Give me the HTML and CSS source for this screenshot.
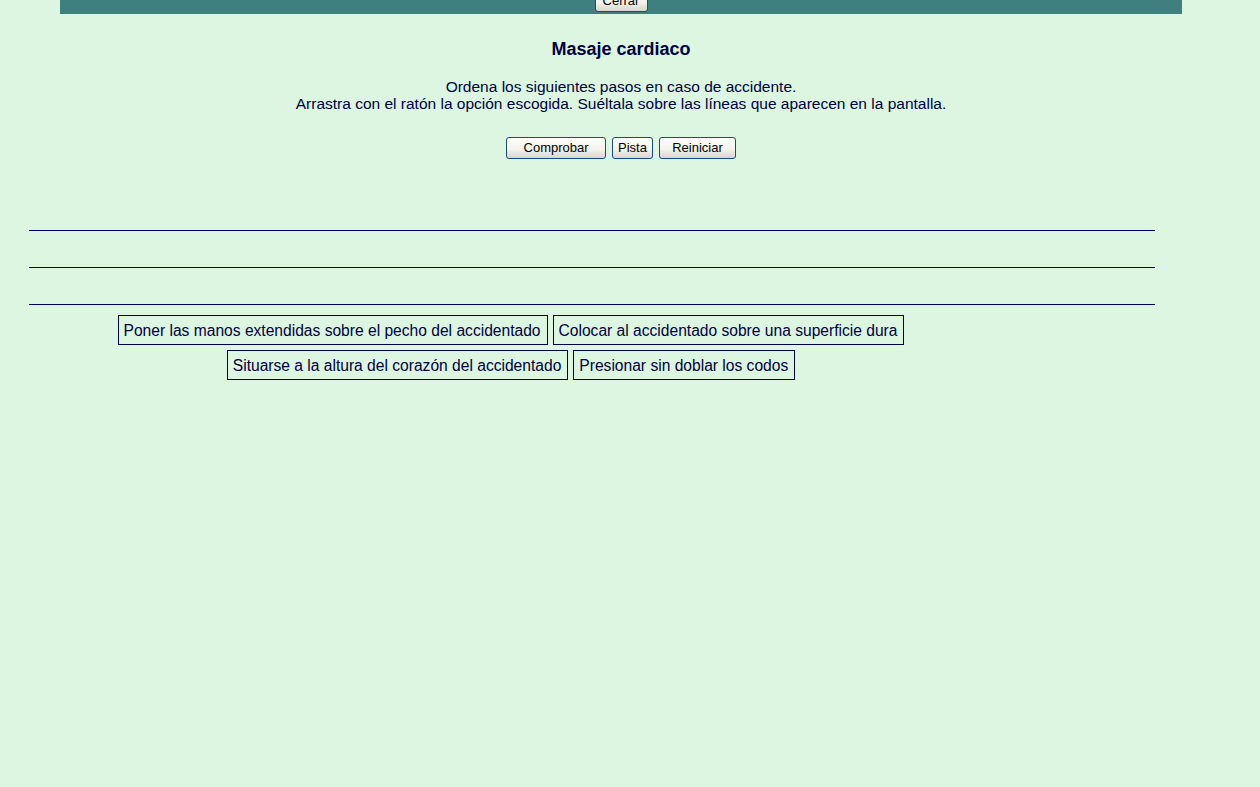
FILE: index.html
```html
<!DOCTYPE html>
<html lang="es">
<head>
<meta charset="utf-8">
<title>Masaje cardiaco</title>
<link rel="stylesheet" href="styles.css">
</head>
<body>
<div class="page">
  <div class="topbar">
    <button class="btn btn-close" type="button">Cerrar</button>
  </div>
  <h1 class="title">Masaje cardiaco</h1>
  <p class="instructions">Ordena los siguientes pasos en caso de accidente.<br>Arrastra con el ratón la opción escogida. Suéltala sobre las líneas que aparecen en la pantalla.</p>
  <div class="actions">
    <button class="btn btn-check" type="button">Comprobar</button>
    <button class="btn" type="button">Pista</button>
    <button class="btn btn-reset" type="button">Reiniciar</button>
  </div>
  <div class="slots">
    <div class="slot"></div>
    <div class="slot"></div>
    <div class="slot"></div>
  </div>
  <div class="options">
    <div class="option">Poner las manos extendidas sobre el pecho del accidentado</div>
    <div class="option">Colocar al accidentado sobre una superficie dura</div>
    <div class="option">Situarse a la altura del corazón del accidentado</div>
    <div class="option">Presionar sin doblar los codos</div>
  </div>
</div>
</body>
</html>
```
FILE: styles.css
```css
html, body {
  margin: 0;
  padding: 0;
  background: #ddf6e2;
}
body {
  font-family: "Liberation Sans", Arial, sans-serif;
  color: #000040;
}
.page {
  width: 1242px;
}
.topbar {
  margin: 0 60px;
  height: 14px;
  background: #407f7f;
  display: flex;
  justify-content: center;
  align-items: flex-end;
  overflow: hidden;
}
.btn {
  font-family: "Liberation Sans", Arial, sans-serif;
  font-size: 13px;
  color: #000;
  height: 22px;
  padding: 0 5px;
  border: 1px solid #1a4a86;
  border-radius: 3px;
  background: linear-gradient(#ffffff, #f2f1ea 60%, #d8d6cc);
  line-height: 18px;
  margin: 0 2px;
}
.btn-close {
  margin: 0 0 2px 0;
  width: 53px;
  height: 22px;
  padding: 0;
}
.btn-check { width: 100px; }
.btn-reset { width: 77px; }
.title {
  margin: 24px 0 0;
  text-align: center;
  font-size: 18px;
  font-weight: bold;
  line-height: 22px;
  color: #000040;
}
.instructions {
  margin: 18px 0 0;
  text-align: center;
  font-size: 15.5px;
  line-height: 17px;
}
.actions {
  margin-top: 25px;
  display: flex;
  justify-content: center;
  gap: 2px;
}
.slots {
  margin: 71px 0 0 29px;
  width: 1126px;
  display: flex;
  flex-direction: column;
  gap: 36px;
}
.slot {
  height: 1px;
  background: #000050;
}
.options {
  margin-top: 10px;
  width: 1022px;
  display: flex;
  flex-wrap: wrap;
  justify-content: center;
  column-gap: 5px;
  row-gap: 5px;
}
.option {
  border: 1px solid #000040;
  height: 28px;
  line-height: 29px;
  padding: 0 6px 0 5px;
  font-size: 15.6px;
  white-space: nowrap;
}
```
